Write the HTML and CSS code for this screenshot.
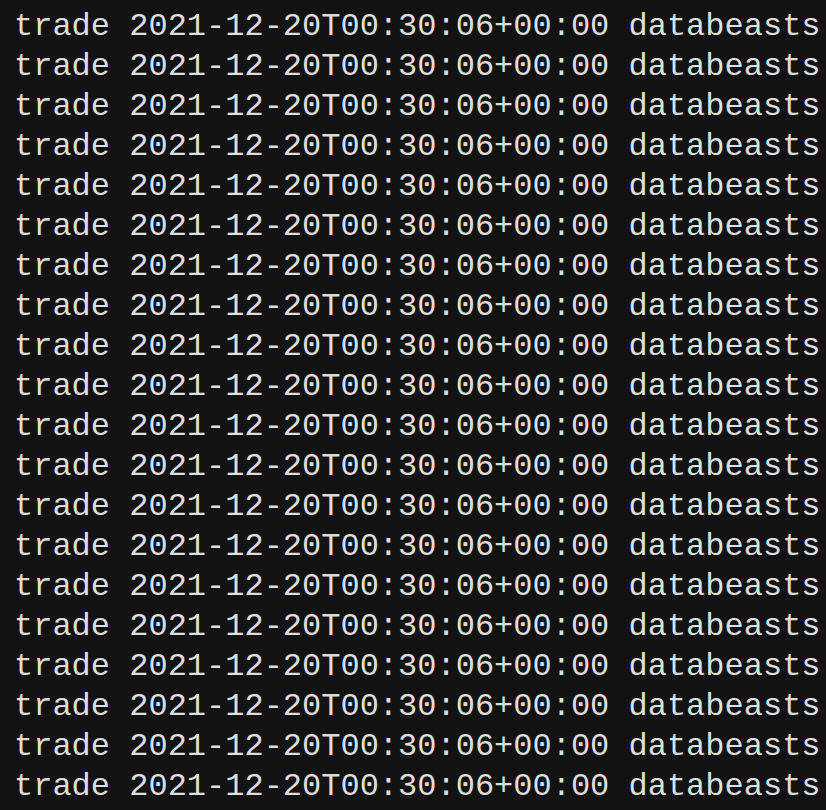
FILE: index.html
```html
<!DOCTYPE html>
<html>
<head>
<meta charset="utf-8">
<link rel="stylesheet" href="styles.css">
</head>
<body>
<pre class="log">trade 2021-12-20T00:30:06+00:00 databeasts
trade 2021-12-20T00:30:06+00:00 databeasts
trade 2021-12-20T00:30:06+00:00 databeasts
trade 2021-12-20T00:30:06+00:00 databeasts
trade 2021-12-20T00:30:06+00:00 databeasts
trade 2021-12-20T00:30:06+00:00 databeasts
trade 2021-12-20T00:30:06+00:00 databeasts
trade 2021-12-20T00:30:06+00:00 databeasts
trade 2021-12-20T00:30:06+00:00 databeasts
trade 2021-12-20T00:30:06+00:00 databeasts
trade 2021-12-20T00:30:06+00:00 databeasts
trade 2021-12-20T00:30:06+00:00 databeasts
trade 2021-12-20T00:30:06+00:00 databeasts
trade 2021-12-20T00:30:06+00:00 databeasts
trade 2021-12-20T00:30:06+00:00 databeasts
trade 2021-12-20T00:30:06+00:00 databeasts
trade 2021-12-20T00:30:06+00:00 databeasts
trade 2021-12-20T00:30:06+00:00 databeasts
trade 2021-12-20T00:30:06+00:00 databeasts
trade 2021-12-20T00:30:06+00:00 databeasts</pre>
</body>
</html>
```
FILE: styles.css
```css
html, body {
  margin: 0;
  padding: 0;
  background: #121212;
}
.log {
  margin: 0;
  padding: 7px 0 0 14px;
  font-family: "Liberation Mono", monospace;
  font-size: 32px;
  line-height: 40px;
  color: #dedede;
  white-space: pre;
}
```
